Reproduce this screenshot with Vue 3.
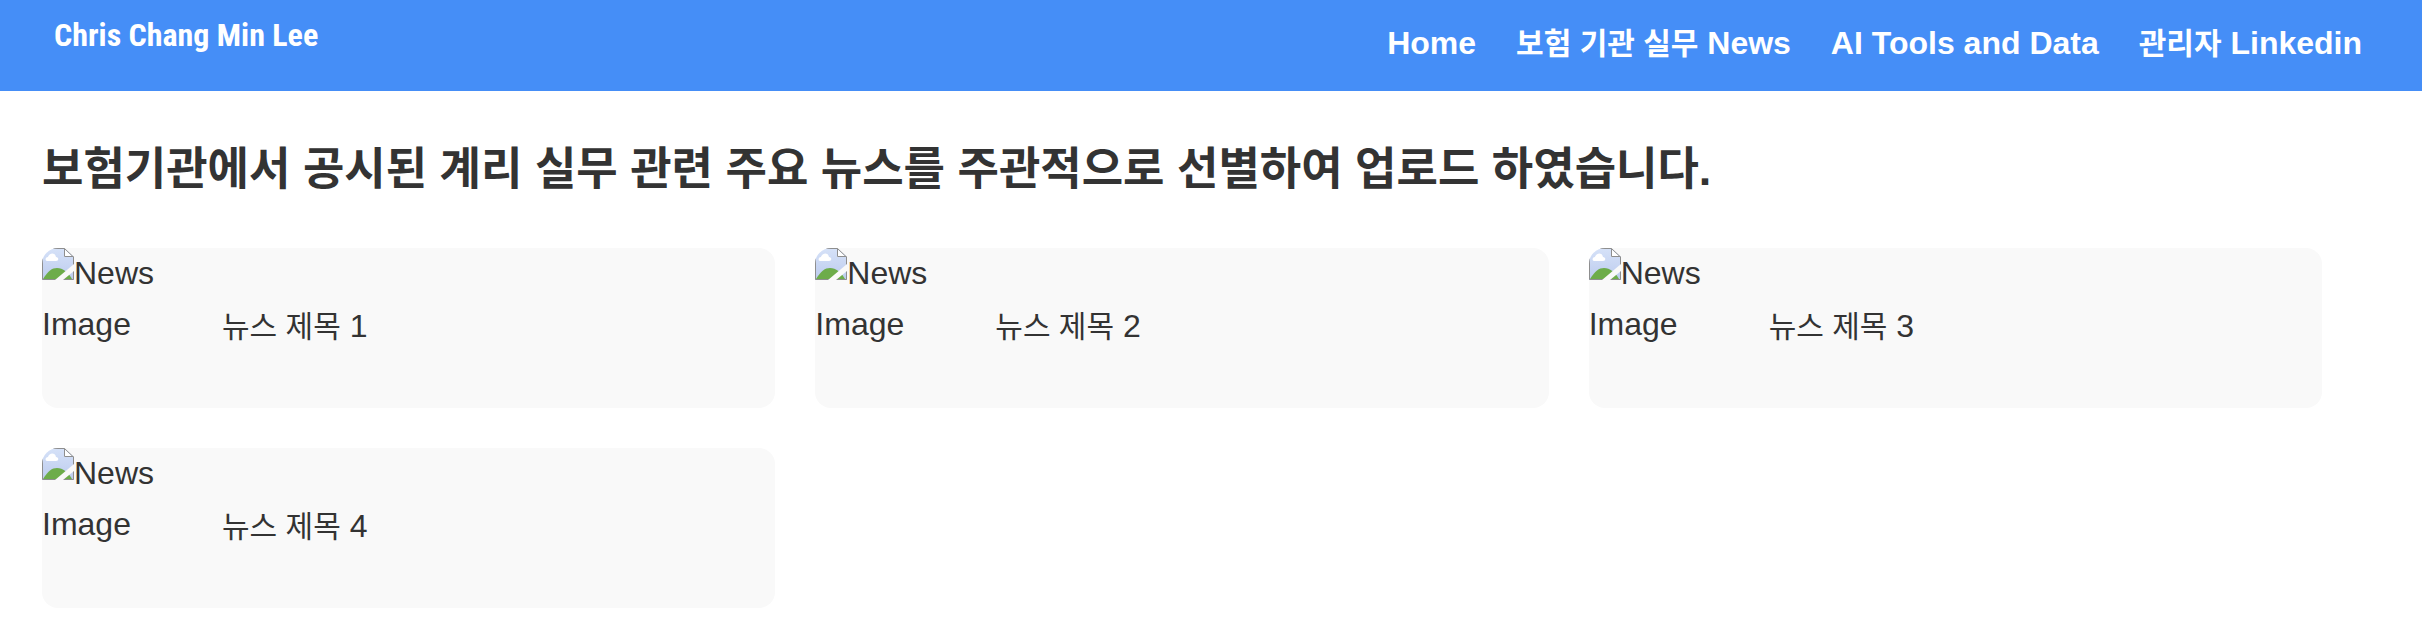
<template>
  <div class="page">
    <header class="header">
      <a href="#" class="logo">Chris Chang Min Lee</a>
      <nav class="nav">
        <a v-for="item in menu" :key="item.en" href="#" class="nav-link">
          <span v-if="item.ko" class="ko">{{ item.ko }}</span>
          {{ item.en }}
        </a>
      </nav>
    </header>

    <main class="content">
      <h1 class="title">
        보험기관에서 공시된 계리 실무 관련 주요 뉴스를 주관적으로 선별하여 업로드 하였습니다.
      </h1>

      <div class="news-grid">
        <article v-for="id in newsList" :key="id" class="news-card">
          <div class="news-image">
            <svg class="image-icon" viewBox="0 0 32 32" aria-hidden="true">
              <defs>
                <linearGradient :id="'sky' + id" x1="0" y1="0" x2="0" y2="1">
                  <stop offset="0" stop-color="#d6e2f8" />
                  <stop offset="1" stop-color="#bccbee" />
                </linearGradient>
              </defs>
              <path d="M0 0H22L32 9V32H0Z" :fill="'url(#sky' + id + ')'" />
              <path
                d="M5 13C3 13 3 9 6 9C7 5 13 4 14 9C17 9 17 13 14 13Z"
                fill="#ffffff"
              />
              <path d="M1 31C6 23 10 20 15 20C21 20 26 24 30 31Z" fill="#6dac4a" />
              <path d="M22 1V9H31Z" fill="#ffffff" />
              <path
                d="M.5 31.5V.5H22.5L31.5 9V31.5H.5M22.5 .5V8.5H31.5"
                fill="none"
                stroke="#8e8e8e"
              />
              <path d="M13 32L32 16V23L21 32Z" fill="#f9f9f9" />
            </svg>
            <span>News Image</span>
          </div>
          <p class="news-title"><span class="ko">뉴스 제목</span> {{ id }}</p>
        </article>
      </div>
    </main>
  </div>
</template>

<script setup>
import { ref } from "vue";

// 상단 메뉴
const menu = [
  { ko: "", en: "Home" },
  { ko: "보험 기관 실무", en: "News" },
  { ko: "", en: "AI Tools and Data" },
  { ko: "관리자", en: "Linkedin" },
];

// 뉴스 번호 목록
const newsList = ref([1, 2, 3, 4]);
</script>

<style>
body {
  margin: 0;
  background: #ffffff;
}
</style>

<style scoped>
.page {
  font-family: "Liberation Sans", "Noto Sans CJK KR", sans-serif;
  font-size: 32px;
  line-height: 51px;
  color: #333333;
}
.header {
  display: flex;
  justify-content: space-between;
  align-items: flex-start;
  padding: 10px 60px 22px 54px;
  background: #458ef7;
}
.logo {
  font-family: "Roboto Condensed", "Liberation Sans Narrow", "Liberation Sans", sans-serif;
  font-size: 32px;
  font-weight: 700;
  color: #ffffff;
  text-decoration: none;
}
.nav {
  display: flex;
  align-items: baseline;
  gap: 40px;
  padding-top: 8px;
}
.nav-link {
  color: #ffffff;
  font-weight: 700;
  text-decoration: none;
}
.ko {
  font-size: 30px;
}
.content {
  padding: 40px 100px 36px 42px;
}
.title {
  margin: 0 0 40px;
  font-size: 45px;
  line-height: 77px;
  font-weight: 700;
}
.news-grid {
  display: grid;
  grid-template-columns: repeat(3, 1fr);
  gap: 40px;
}
.news-card {
  display: flex;
  align-items: center;
  gap: 20px;
  background: #f9f9f9;
  border-radius: 16px;
  overflow: hidden;
}
.news-image {
  width: 160px;
  height: 160px;
}
.image-icon {
  float: left;
  width: 32px;
  height: 32px;
}
.news-title {
  margin: 0;
  padding-bottom: 4px;
}
</style>
